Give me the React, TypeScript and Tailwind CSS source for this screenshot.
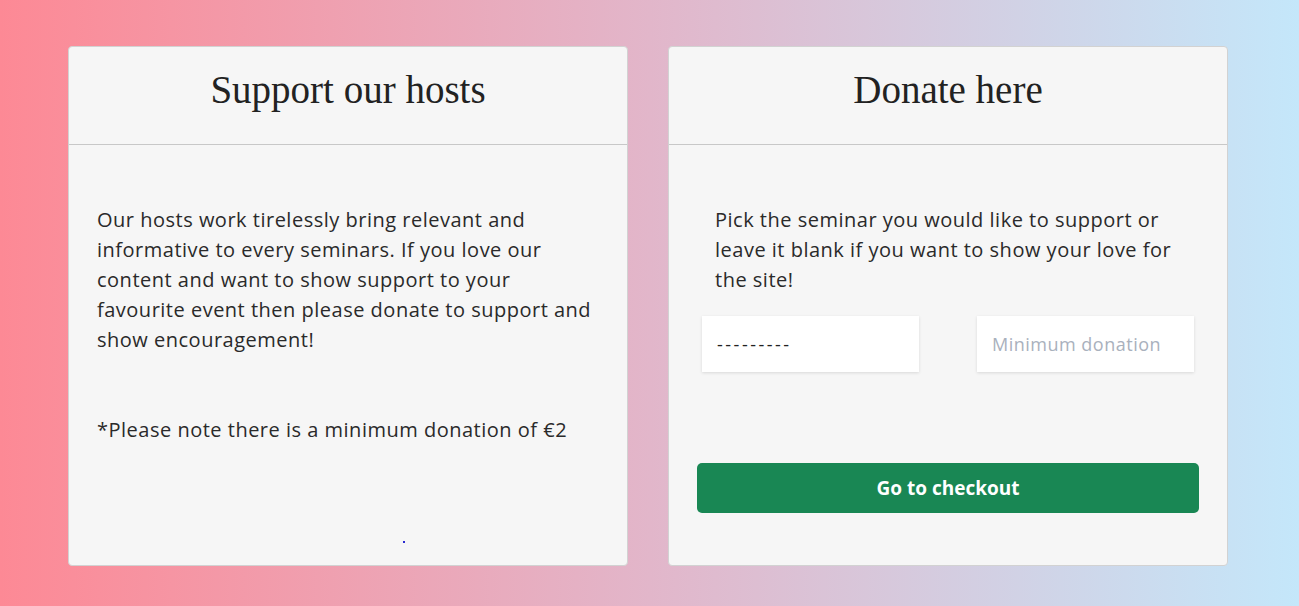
export default function App() {
  return (
    <div className="min-h-[606px] w-full bg-[linear-gradient(to_right,#fd8995,#e2b6ca_50%,#c4e7fa)] px-[68px] pt-[46px] pb-[40px]">
      <div className="flex gap-[40px]">
        {/* Support card */}
        <div className="flex h-[520px] w-[560px] flex-col rounded-[4px] border border-[#d2d2d2] bg-[#f6f6f6]">
          <div className="flex h-[98px] items-center justify-center border-b border-[#c8c8c8] pb-[10px]">
            <h2 className="font-['Liberation_Serif',serif] text-[39px] text-[#222]">Support our hosts</h2>
          </div>
          <div className="relative flex-1 px-[28px] pt-[60px] font-['Open_Sans',sans-serif] text-[20px] leading-[30px] tracking-[0.5px] text-[#2a2a2a]">
            <p>
              Our hosts work tirelessly bring relevant and informative to every seminars. If you love our content and want to show support to your favourite event then please donate to support and show encouragement!
            </p>
            <p className="mt-[60px]">*Please note there is a minimum donation of €2</p>
            <span className="absolute left-[334px] top-[396px] h-[2px] w-[2px] bg-[#2a2ad0]" />
          </div>
        </div>

        {/* Donate card */}
        <div className="flex h-[520px] w-[560px] flex-col rounded-[4px] border border-[#d2d2d2] bg-[#f6f6f6]">
          <div className="flex h-[98px] items-center justify-center border-b border-[#c8c8c8] pb-[10px]">
            <h2 className="font-['Liberation_Serif',serif] text-[39px] text-[#222]">Donate here</h2>
          </div>
          <div className="flex-1 px-[28px] pt-[60px]">
            <p className="px-[18px] font-['Open_Sans',sans-serif] text-[20px] leading-[30px] tracking-[0.5px] text-[#2a2a2a]">
              Pick the seminar you would like to support or leave it blank if you want to show your love for the site!
            </p>
            <div className="mt-[21px] flex justify-between px-[5px]">
              <div className="flex h-[56px] w-[217px] items-center bg-white px-[15px] font-['Open_Sans',sans-serif] text-[18px] tracking-[2.5px] text-[#222] shadow-[0_1px_3px_rgba(0,0,0,0.12)]">
                ---------
              </div>
              <div className="flex h-[56px] w-[217px] items-center bg-white px-[15px] font-['Open_Sans',sans-serif] text-[18px] tracking-[0.5px] text-[#a9b1bd] shadow-[0_1px_3px_rgba(0,0,0,0.12)]">
                Minimum donation
              </div>
            </div>
            <button className="mt-[91px] h-[50px] w-full rounded-[5px] bg-[#198754] font-['Open_Sans',sans-serif] text-[19px] font-bold text-white">
              Go to checkout
            </button>
          </div>
        </div>
      </div>
    </div>
  )
}
